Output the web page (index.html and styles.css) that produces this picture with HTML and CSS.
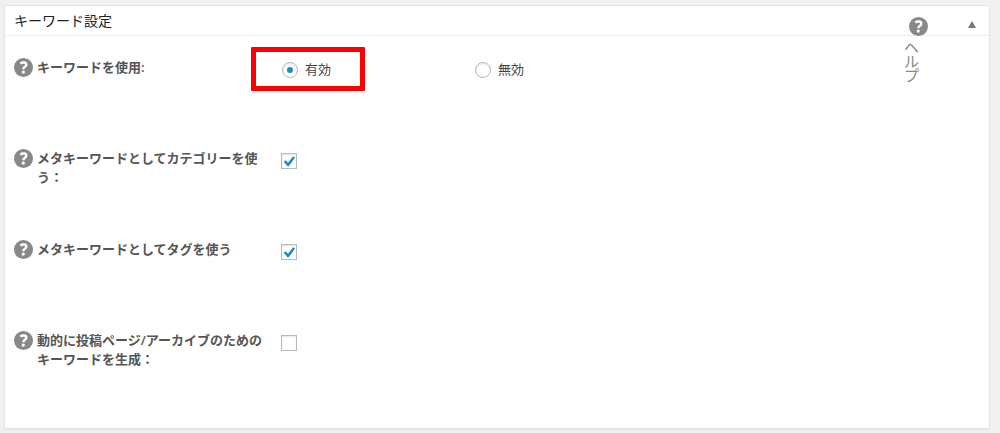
FILE: index.html
```html
<!DOCTYPE html>
<html lang="ja">
<head>
<meta charset="utf-8">
<meta name="viewport" content="width=device-width, initial-scale=1">
<title>キーワード設定</title>
<link rel="stylesheet" href="styles.css">
</head>
<body>
<svg class="sprite" aria-hidden="true">
  <symbol id="help-icon" viewBox="0 0 19 19">
    <circle cx="9.5" cy="9.5" r="9.5" fill="#888"/>
    <path d="M6.4 5.6C8.2 3.9 12.3 4 12.3 6.7C12.3 8.9 9.3 8.7 9.3 11.3" fill="none" stroke="#fff" stroke-width="2.5"/>
    <circle cx="9.3" cy="14.1" r="1.6" fill="#fff"/>
  </symbol>
</svg>
<main class="panel">
  <header class="panel-header">
    <h1 class="panel-title">キーワード設定</h1>
    <button class="toggle" type="button" aria-label="パネルを閉じる"><span class="arrow"></span></button>
    <a class="help-link" href="#"><svg class="help-icon"><use href="#help-icon"/></svg><span class="help-text">ヘルプ</span></a>
  </header>
  <form class="settings">
    <div class="row" role="radiogroup" aria-labelledby="use-label">
      <button class="help" type="button" aria-label="説明"><svg class="help-icon"><use href="#help-icon"/></svg></button>
      <span class="row-label" id="use-label">キーワードを使用:</span>
      <div class="options">
        <div class="option"><label class="choice highlight"><input class="radio" type="radio" name="use" checked>有効</label></div>
        <div class="option"><label class="choice"><input class="radio" type="radio" name="use">無効</label></div>
      </div>
    </div>
    <div class="row">
      <button class="help" type="button" aria-label="説明"><svg class="help-icon"><use href="#help-icon"/></svg></button>
      <label class="row-label" for="category">メタキーワードとしてカテゴリーを使う：</label>
      <div class="options"><input class="check" type="checkbox" id="category" checked></div>
    </div>
    <div class="row">
      <button class="help" type="button" aria-label="説明"><svg class="help-icon"><use href="#help-icon"/></svg></button>
      <label class="row-label" for="tag">メタキーワードとしてタグを使う</label>
      <div class="options"><input class="check" type="checkbox" id="tag" checked></div>
    </div>
    <div class="row">
      <button class="help" type="button" aria-label="説明"><svg class="help-icon"><use href="#help-icon"/></svg></button>
      <label class="row-label" for="dynamic">動的に投稿ページ/アーカイブのためのキーワードを生成：</label>
      <div class="options"><input class="check" type="checkbox" id="dynamic"></div>
    </div>
  </form>
</main>
</body>
</html>
```
FILE: styles.css
```css
* {
  box-sizing: border-box;
}

body {
  margin: 0;
  padding: 5px 10px 4px 4px;
  background: #f1f1f1;
  color: #444;
  font: 13px/19px "Open Sans", "Noto Sans CJK JP", sans-serif;
}

button {
  padding: 0;
  border: 0;
  background: none;
  cursor: pointer;
}

.sprite {
  display: none;
}

.panel {
  border: 1px solid #e5e5e5;
  background: #fff;
  box-shadow: 0 1px 1px rgba(0, 0, 0, 0.04);
}

.panel-header {
  position: relative;
  display: flex;
  align-items: center;
  justify-content: space-between;
  height: 30px;
  padding: 0 12px 2px 9px;
  border-bottom: 1px solid #eee;
}

.panel-title {
  margin: 0;
  color: #222;
  font: 400 14px/20px "Noto Sans CJK JP", sans-serif;
}

.toggle {
  display: flex;
  padding: 10px 1px 0;
}

.arrow {
  border: 4px solid transparent;
  border-top: 0;
  border-bottom: 7px solid #72777c;
}

.help-link {
  position: absolute;
  top: 11px;
  right: 60px;
  width: 25px;
  color: #888;
  text-decoration: none;
}

.help-icon {
  display: block;
  width: 19px;
  height: 19px;
}

.help-link .help-icon {
  margin-left: 5px;
}

.help-text {
  display: block;
  width: 15px;
  padding-top: 4px;
  font-size: 15px;
  line-height: 14px;
  word-break: break-all;
}

.settings {
  padding: 22px 9px 0;
}

.row {
  display: grid;
  grid-template-columns: 23px 232px 1fr;
  align-items: start;
  min-height: 91px;
}

.row:last-child {
  min-height: 97px;
}

.row-label {
  color: #555;
  font-weight: 600;
}

.options {
  display: flex;
  padding: 3px 0 0 12px;
}

.option {
  display: flex;
  flex: 0 0 193px;
}

.choice {
  position: relative;
  display: flex;
  align-items: center;
  gap: 7px;
  height: 17px;
  padding-left: 1px;
}

.highlight::after {
  content: "";
  position: absolute;
  inset: -14px -34px -13px -30px;
  border: 5px solid #f00;
  border-radius: 1px;
  pointer-events: none;
}

.radio,
.check {
  display: grid;
  place-content: center;
  width: 16px;
  height: 16px;
  margin: 0;
  border: 1px solid #b4b9be;
  background: #fff;
  box-shadow: inset 0 1px 2px rgba(0, 0, 0, 0.1);
  appearance: none;
}

.radio {
  border-radius: 50%;
}

.check {
  margin-top: 1px;
}

.radio:checked::before {
  content: "";
  width: 6px;
  height: 6px;
  border-radius: 50%;
  background: #1e8cbe;
}

.check:checked::before {
  content: "";
  width: 12px;
  height: 12px;
  background: #1e8cbe;
  clip-path: polygon(6% 56%, 22% 44%, 42% 64%, 84% 10%, 100% 22%, 48% 94%, 38% 94%);
}
```
